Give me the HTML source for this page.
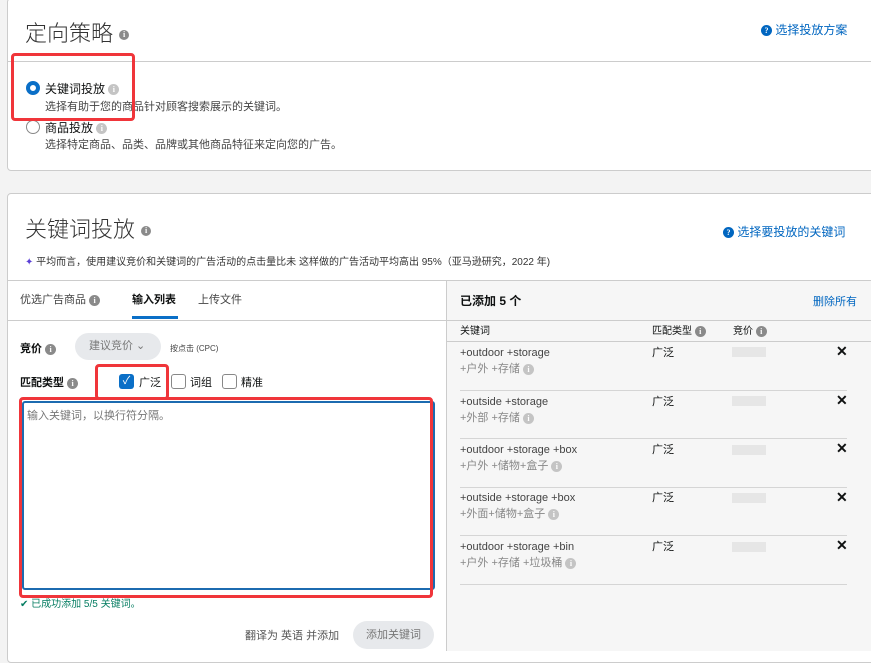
<!DOCTYPE html><html><head><meta charset="utf-8"><style>
*{box-sizing:border-box;margin:0;padding:0}
body{width:871px;height:649px;overflow:hidden;background:#f3f3f3;font-family:"Liberation Sans","Noto Sans CJK SC",sans-serif;color:#0f1111;position:relative}
.a{position:absolute;white-space:nowrap}
.i{display:inline-block;width:11px;height:11px;border-radius:50%;background:#8a8a8a;color:#fff;font-size:8px;line-height:11px;text-align:center;font-weight:bold;vertical-align:middle;font-family:"Liberation Serif",serif}
.il{background:#c4c4c4}
.red{position:absolute;border:3px solid #f0353a;border-radius:4px}
.x{font-weight:bold;font-size:14px}
.gbar{position:absolute;width:34px;height:10px;background:#e6e6e6}
.hr{position:absolute;height:1px;background:#d5d5d5}
.t{font-weight:300;color:#333}
</style></head><body>
<div class="a" style="left:7px;top:-2px;width:870px;height:173px;background:#fff;border:1px solid #ccc;border-radius:4px"></div>
<div class="a t" style="left:25px;top:16px;font-size:22px">定向策略 <span class="i" style="width:10px;height:10px;line-height:10px">i</span></div>
<div class="a" style="left:761px;top:21px;font-size:12px;color:#0066c0"><span class="i" style="background:#0066c0">?</span> 选择投放方案</div>
<div class="hr" style="left:8px;top:61px;width:863px;background:#ccc"></div>
<div class="a" style="left:26px;top:81px;width:14px;height:14px;border-radius:50%;border:4px solid #0a6fc7"></div>
<div class="a" style="left:45px;top:80px;font-size:12px">关键词投放 <span class="i il">i</span></div>
<div class="a" style="left:45px;top:98px;font-size:11px;color:#444">选择有助于您的商品针对顾客搜索展示的关键词。</div>
<div class="a" style="left:26px;top:120px;width:14px;height:14px;border-radius:50%;border:1px solid #888"></div>
<div class="a" style="left:45px;top:119px;font-size:12px">商品投放 <span class="i il">i</span></div>
<div class="a" style="left:45px;top:136px;font-size:11px;color:#444">选择特定商品、品类、品牌或其他商品特征来定向您的广告。</div>
<div class="red" style="left:11px;top:53px;width:124px;height:68px"></div>

<div class="a" style="left:7px;top:193px;width:870px;height:470px;background:#fff;border:1px solid #ccc;border-radius:4px"></div>
<div class="a t" style="left:25px;top:212px;font-size:22px">关键词投放 <span class="i" style="width:10px;height:10px;line-height:10px">i</span></div>
<div class="a" style="left:723px;top:223px;font-size:12px;color:#0066c0"><span class="i" style="background:#0066c0">?</span> 选择要投放的关键词</div>
<div class="a" style="left:25px;top:253px;font-size:10px;color:#333"><span style="color:#5a3fd6">✦</span> 平均而言，使用建议竞价和关键词的广告活动的点击量比未 这样做的广告活动平均高出 95%（亚马逊研究，2022 年)</div>
<div class="hr" style="left:8px;top:280px;width:863px;background:#ccc"></div>
<div class="a" style="left:446px;top:281px;width:425px;height:370px;background:#f6f6f6;border-left:1px solid #ccc"></div>
<div class="a" style="left:20px;top:291px;font-size:11px;color:#444">优选广告商品 <span class="i">i</span></div>
<div class="a" style="left:132px;top:291px;font-size:11px;font-weight:bold">输入列表</div>
<div class="a" style="left:132px;top:316px;width:46px;height:3px;background:#0a6fc7"></div>
<div class="a" style="left:198px;top:291px;font-size:11px;color:#444">上传文件</div>
<div class="hr" style="left:8px;top:320px;width:438px;background:#ccc"></div>
<div class="a" style="left:20px;top:340px;font-size:11px;font-weight:bold">竞价 <span class="i">i</span></div>
<div class="a" style="left:75px;top:333px;width:86px;height:27px;border-radius:14px;background:#e7e9ec;font-size:11px;color:#777;line-height:27px;padding-left:14px">建议竞价 ⌄</div>
<div class="a" style="left:170px;top:343px;font-size:8px;color:#444">按点击 (CPC)</div>
<div class="a" style="left:20px;top:374px;font-size:11px;font-weight:bold">匹配类型 <span class="i">i</span></div>
<div class="a" style="left:119px;top:374px;width:15px;height:15px;border-radius:3px;background:#0a6fc7;color:#fff;font-size:11px;line-height:15px;text-align:center">✓</div>
<div class="a" style="left:139px;top:374px;font-size:11px">广泛</div>
<div class="a" style="left:171px;top:374px;width:15px;height:15px;border-radius:3px;border:1px solid #888"></div>
<div class="a" style="left:190px;top:374px;font-size:11px">词组</div>
<div class="a" style="left:222px;top:374px;width:15px;height:15px;border-radius:3px;border:1px solid #888"></div>
<div class="a" style="left:241px;top:374px;font-size:11px">精准</div>
<div class="red" style="left:95px;top:364px;width:74px;height:36px"></div>
<div class="a" style="left:22px;top:401px;width:413px;height:189px;border:2px solid #1c6bb0;border-radius:3px;background:#fff"></div>
<div class="a" style="left:27px;top:407px;font-size:11px;color:#777">输入关键词，以换行符分隔。</div>
<div class="red" style="left:19px;top:397px;width:414px;height:201px"></div>
<div class="a" style="left:20px;top:595px;font-size:10px;color:#067d62">✔ 已成功添加 5/5 关键词。</div>
<div class="a" style="left:245px;top:627px;font-size:11px;color:#555">翻译为 英语 并添加</div>
<div class="a" style="left:353px;top:621px;width:81px;height:28px;border-radius:14px;background:#e7e9ec;font-size:11px;color:#777;line-height:28px;text-align:center">添加关键词</div>

<div class="a" style="left:460px;top:292px;font-size:12px;font-weight:bold">已添加 5 个</div>
<div class="a" style="left:813px;top:293px;font-size:11px;color:#0066c0">删除所有</div>
<div class="hr" style="left:447px;top:320px;width:424px;background:#ccc"></div>
<div class="a" style="left:460px;top:322px;font-size:10px">关键词</div>
<div class="a" style="left:652px;top:322px;font-size:10px">匹配类型 <span class="i">i</span></div>
<div class="a" style="left:733px;top:322px;font-size:10px">竞价 <span class="i">i</span></div>
<div class="hr" style="left:447px;top:341px;width:424px;background:#ccc"></div>

<div class="a" style="left:460px;top:345px;font-size:11px;line-height:16px;color:#444">+outdoor +storage<br><span style="color:#888">+户外 +存储 <span class="i il">i</span></span></div>
<div class="a" style="left:652px;top:344px;font-size:11px">广泛</div><div class="gbar" style="left:732px;top:347px"></div><div class="a x" style="left:836px;top:343px">✕</div>
<div class="hr" style="left:460px;top:390px;width:387px"></div>
<div class="a" style="left:460px;top:394px;font-size:11px;line-height:16px;color:#444">+outside +storage<br><span style="color:#888">+外部 +存储 <span class="i il">i</span></span></div>
<div class="a" style="left:652px;top:393px;font-size:11px">广泛</div><div class="gbar" style="left:732px;top:396px"></div><div class="a x" style="left:836px;top:392px">✕</div>
<div class="hr" style="left:460px;top:438px;width:387px"></div>
<div class="a" style="left:460px;top:442px;font-size:11px;line-height:16px;color:#444">+outdoor +storage +box<br><span style="color:#888">+户外 +储物+盒子 <span class="i il">i</span></span></div>
<div class="a" style="left:652px;top:441px;font-size:11px">广泛</div><div class="gbar" style="left:732px;top:445px"></div><div class="a x" style="left:836px;top:440px">✕</div>
<div class="hr" style="left:460px;top:487px;width:387px"></div>
<div class="a" style="left:460px;top:490px;font-size:11px;line-height:16px;color:#444">+outside +storage +box<br><span style="color:#888">+外面+储物+盒子 <span class="i il">i</span></span></div>
<div class="a" style="left:652px;top:489px;font-size:11px">广泛</div><div class="gbar" style="left:732px;top:493px"></div><div class="a x" style="left:836px;top:489px">✕</div>
<div class="hr" style="left:460px;top:535px;width:387px"></div>
<div class="a" style="left:460px;top:539px;font-size:11px;line-height:16px;color:#444">+outdoor +storage +bin<br><span style="color:#888">+户外 +存储 +垃圾桶 <span class="i il">i</span></span></div>
<div class="a" style="left:652px;top:538px;font-size:11px">广泛</div><div class="gbar" style="left:732px;top:542px"></div><div class="a x" style="left:836px;top:537px">✕</div>
<div class="hr" style="left:460px;top:584px;width:387px"></div>
</body></html>
